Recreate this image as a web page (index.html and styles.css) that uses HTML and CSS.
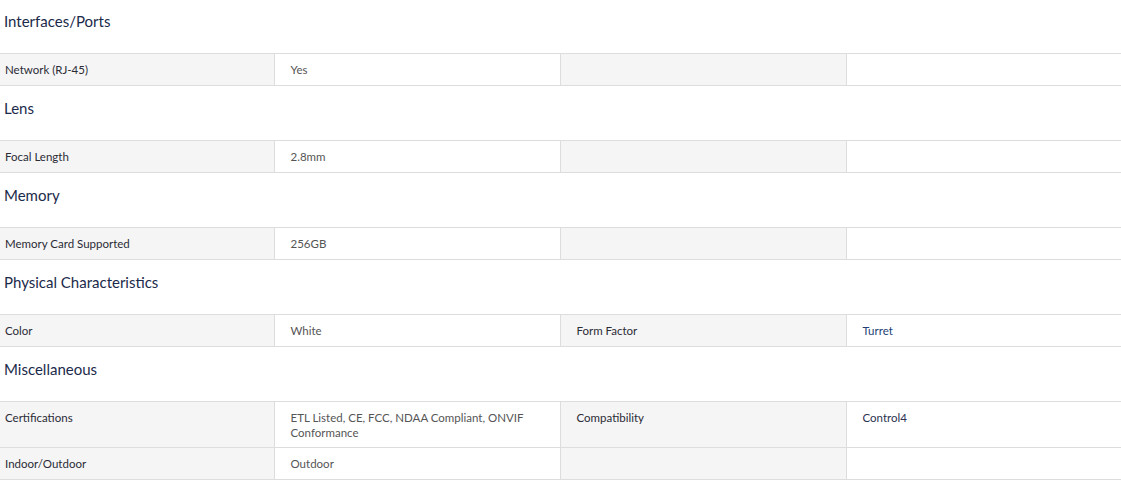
FILE: index.html
```html
<!DOCTYPE html>
<html>
<head>
<meta charset="utf-8">
<link rel="stylesheet" href="styles.css">
</head>
<body>
<div class="specs">
  <section class="group">
    <h3 class="group-title">Interfaces/Ports</h3>
    <table class="spec-table">
      <colgroup><col class="c1"><col class="c2"><col class="c3"><col class="c4"></colgroup>
      <tr><td class="lbl">Network (RJ-45)</td><td class="val">Yes</td><td class="lbl2"></td><td class="val2"></td></tr>
    </table>
  </section>
  <section class="group">
    <h3 class="group-title">Lens</h3>
    <table class="spec-table">
      <colgroup><col class="c1"><col class="c2"><col class="c3"><col class="c4"></colgroup>
      <tr><td class="lbl">Focal Length</td><td class="val">2.8mm</td><td class="lbl2"></td><td class="val2"></td></tr>
    </table>
  </section>
  <section class="group">
    <h3 class="group-title">Memory</h3>
    <table class="spec-table">
      <colgroup><col class="c1"><col class="c2"><col class="c3"><col class="c4"></colgroup>
      <tr><td class="lbl">Memory Card Supported</td><td class="val">256GB</td><td class="lbl2"></td><td class="val2"></td></tr>
    </table>
  </section>
  <section class="group">
    <h3 class="group-title">Physical Characteristics</h3>
    <table class="spec-table">
      <colgroup><col class="c1"><col class="c2"><col class="c3"><col class="c4"></colgroup>
      <tr><td class="lbl">Color</td><td class="val">White</td><td class="lbl2">Form Factor</td><td class="val2 link">Turret</td></tr>
    </table>
  </section>
  <section class="group">
    <h3 class="group-title">Miscellaneous</h3>
    <table class="spec-table">
      <colgroup><col class="c1"><col class="c2"><col class="c3"><col class="c4"></colgroup>
      <tr><td class="lbl">Certifications</td><td class="val">ETL Listed, CE, FCC, NDAA Compliant, ONVIF Conformance</td><td class="lbl2">Compatibility</td><td class="val2 dark">Control4</td></tr>
      <tr><td class="lbl">Indoor/Outdoor</td><td class="val">Outdoor</td><td class="lbl2"></td><td class="val2"></td></tr>
    </table>
  </section>
</div>
</body>
</html>
```
FILE: styles.css
```css
html, body {
  margin: 0;
  padding: 0;
  background: #ffffff;
  font-family: "Lato", "Noto Sans", sans-serif;
}
.specs {
  width: 1121px;
  overflow: hidden;
}
.group-title {
  margin: 12px 0 22px 4px;
  font-size: 15px;
  line-height: 20px;
  font-weight: 400;
  color: #1b2a4a;
}
.group:first-child .group-title {
  margin-top: 11px;
}
.spec-table {
  width: 1121px;
  border-collapse: collapse;
  table-layout: fixed;
  border-top: 1px solid #dddddd;
}
.c1 { width: 274px; }
.c2 { width: 286px; }
.c3 { width: 286px; }
.c4 { width: auto; }
.spec-table td {
  font-size: 11.5px;
  line-height: 15px;
  height: 16px;
  padding: 8px 16px 7px;
  vertical-align: top;
  border-bottom: 1px solid #dddddd;
  border-left: 1px solid #dddddd;
  color: #333333;
}
.spec-table td.lbl {
  border-left: none;
  padding-left: 5px;
  background: #f5f5f5;
  color: #2b2b35;
}
.spec-table td.lbl2 {
  background: #f5f5f5;
  color: #2b2b35;
}
.spec-table td.val {
  color: #555555;
}
.spec-table td.link {
  color: #233f75;
}
.spec-table td.dark {
  color: #2b3350;
}
```
